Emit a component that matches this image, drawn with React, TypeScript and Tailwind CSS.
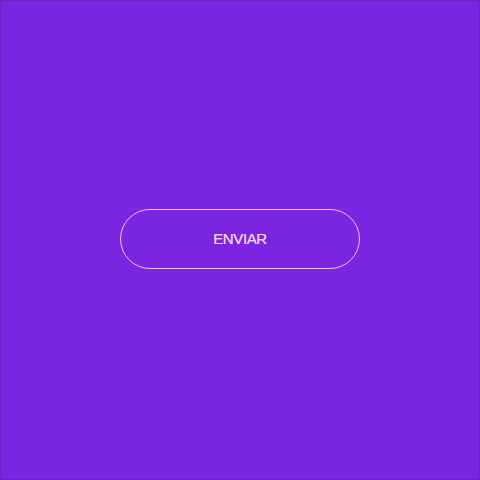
export default function App() {
  return (
    <div className="w-[480px] h-[480px] bg-[#7b25e1] border border-[#6e22c8] flex items-center justify-center pb-[2px]" style={{ fontFamily: '"Liberation Sans", Arial, sans-serif' }}>
      <button className="w-[240px] h-[60px] rounded-full border border-[#e4c6f8] text-[#efcffb] text-[15px] tracking-[-0.4px] bg-transparent [text-shadow:0_0_0.5px_#efcffb]">
        ENVIAR
      </button>
    </div>
  );
}
